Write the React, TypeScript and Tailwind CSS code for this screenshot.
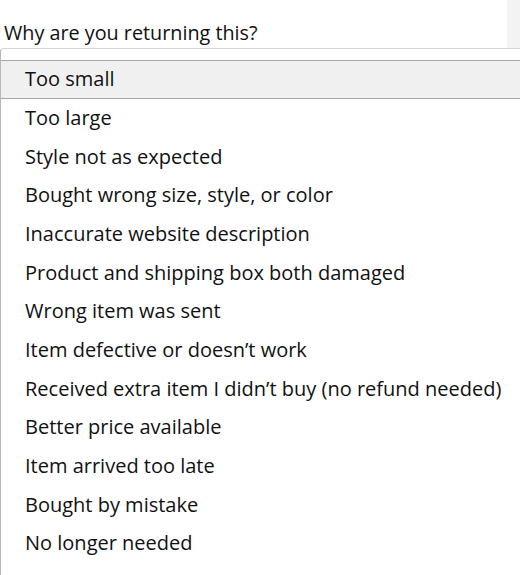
const reasons = [
  "Too small",
  "Too large",
  "Style not as expected",
  "Bought wrong size, style, or color",
  "Inaccurate website description",
  "Product and shipping box both damaged",
  "Wrong item was sent",
  "Item defective or doesn’t work",
  "Received extra item I didn’t buy (no refund needed)",
  "Better price available",
  "Item arrived too late",
  "Bought by mistake",
  "No longer needed",
];

export default function App() {
  const selected = 0;

  return (
    <div className="h-[575px] w-[520px] overflow-hidden bg-white font-['Open_Sans',sans-serif] text-[#111]">
      <div className="flex h-[48px]">
        <div className="flex flex-1 items-end pb-[2px] pl-[4px]">
          <span className="text-[19.8px] leading-[26px] text-[#0f1111]">
            Why are you returning this?
          </span>
        </div>
        <div className="w-[13px] bg-[#f3f3f3]" />
      </div>

      <div className="h-[530px] rounded-tl-[4px] border-t border-l border-t-[#d5d5d5] border-l-[#b8b8b8] pt-[11px]">
        <ul>
          {reasons.map((r, i) => (
            <li
              className={
                i === selected
                  ? "flex h-[38.67px] items-center border-y border-[#a6a6a6] bg-[#f0f0f0] pl-[24px] text-[20px]"
                  : "flex h-[38.67px] items-center pl-[24px] text-[20px]"
              }
              key={r}
            >
              {r}
            </li>
          ))}
        </ul>
      </div>
    </div>
  );
}
